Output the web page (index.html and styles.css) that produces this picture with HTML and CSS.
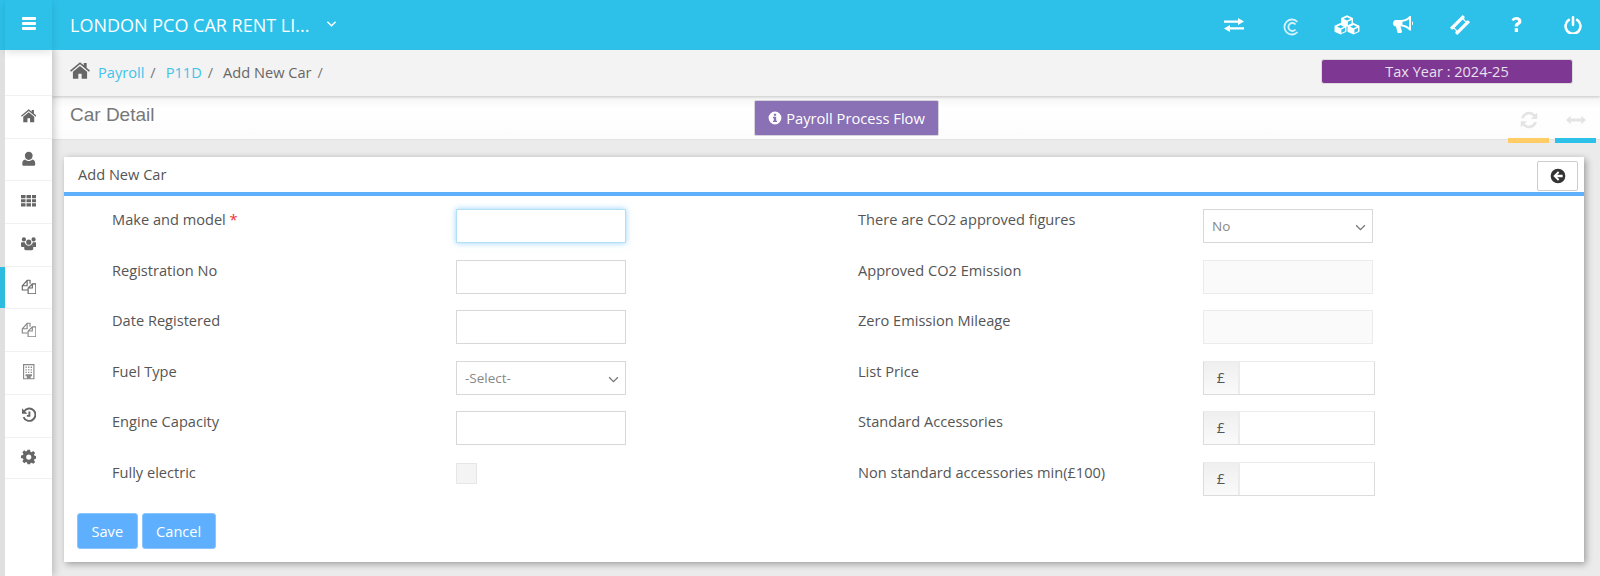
FILE: index.html
```html
<!DOCTYPE html>
<html lang="en">
<head>
<meta charset="utf-8">
<title>Add New Car</title>
<link rel="stylesheet" href="styles.css">
</head>
<body>
<svg class="defs" width="0" height="0" aria-hidden="true">
  <symbol id="i-home" viewBox="0 0 24 20"><path fill="currentColor" d="M12 0 0 10l1.300 1.500L12 2.600l10.700 8.900L24 10l-4-3.400V1h-3.500v2.700zM3.500 11.500V20H10v-6h4v6h6.500v-8.500L12 4.500z"/></symbol>
  <symbol id="i-user" viewBox="0 0 24 24"><path fill="currentColor" d="M12 1a6 6 0 0 1 6 6.500c0 3.500-2.500 6.500-6 6.500s-6-3-6-6.500A6 6 0 0 1 12 1zM6.500 13c1.400 1.500 3.300 2.300 5.500 2.300s4.100-.8 5.500-2.300c3 .5 4.500 2.700 4.500 6v1.500c0 1.400-1 2.500-2.500 2.500h-15C3 23 2 21.900 2 20.500V19c0-3.300 1.500-5.500 4.500-6z"/></symbol>
  <symbol id="i-grid" viewBox="0 0 24 20"><path fill="currentColor" d="M0 1h7v5H0zM8.500 1h7v5h-7zM17 1h7v5h-7zM0 7.500h7v5H0zM8.500 7.500h7v5h-7zM17 7.500h7v5h-7zM0 14h7v5H0zM8.500 14h7v5h-7zM17 14h7v5h-7z"/></symbol>
  <symbol id="i-group" viewBox="0 0 24 20"><path fill="currentColor" d="M12 3.500a4 4 0 1 1 0 8 4 4 0 0 1 0-8zM4.500 0a3.300 3.300 0 1 1 0 6.600 3.300 3.300 0 0 1 0-6.600zM19.500 0a3.300 3.300 0 1 1 0 6.600 3.300 3.300 0 0 1 0-6.600zM1 7.500h4.800c.2 1.600 1 3 2.200 3.900-1.700.6-2.700 1.900-3 3.600H2c-1 0-2-.6-2-2V9.500c0-1 .3-2 1-2zM23 7.500h-4.800c-.2 1.600-1 3-2.200 3.900 1.700.6 2.700 1.900 3 3.600h3c1 0 2-.6 2-2V9.500c0-1-.3-2-1-2zM8 11.500c1 1 2.500 1.500 4 1.500s3-.5 4-1.500c2 .3 3 1.900 3 4v2c0 1.500-1 2.500-2.500 2.500h-9C6 20 5 19 5 17.500v-2c0-2.100 1-3.700 3-4z"/></symbol>
  <symbol id="i-docs" viewBox="0 0 24 24"><path fill="none" stroke="currentColor" stroke-width="1.800" stroke-linejoin="round" d="M10 17H2v-6.500L9.500 2H14v5.500M11 23V14l6.500-6.500H23V23zM9.500 2v8.500H2M17.500 7.500V14H11"/></symbol>
  <symbol id="i-building" viewBox="0 0 20 24"><path fill="none" stroke="currentColor" stroke-width="1.800" d="M2 1h16v22H2z"/><path fill="currentColor" d="M5 4h2v2H5zM9 4h2v2H9zM13 4h2v2h-2zM5 8h2v2H5zM9 8h2v2H9zM13 8h2v2h-2zM5 12h2v2H5zM9 12h2v2H9zM13 12h2v2h-2zM5 16h10v3h-2v4H7v-4H5z"/></symbol>
  <symbol id="i-history" viewBox="0 0 24 24"><path fill="none" stroke="currentColor" stroke-width="3" d="M5 6.500A9.500 9.500 0 1 1 4 15.500"/><path fill="currentColor" d="M1.500 2v8.500H10zM11.500 7h3v8H9v-2.600h2.500z"/></symbol>
  <symbol id="i-cog" viewBox="0 0 24 24"><path fill="currentColor" fill-rule="evenodd" d="M10 1h4l.6 3.100 1.800.8L19 3.100 21.900 6l-1.800 2.600.8 1.800 3.100.6v4l-3.100.6-.8 1.800 1.800 2.600-2.900 2.900-2.600-1.800-1.800.8L14 24h-4l-.6-3.100-1.800-.8L5 21.900 2.100 19l1.800-2.600-.8-1.800L0 14v-4l3.100-.6.800-1.800L2.100 5 5 2.100l2.600 1.800 1.800-.8zM12 8.500a4 4 0 1 0 0 8 4 4 0 0 0 0-8z"/></symbol>
  <symbol id="i-swap" viewBox="0 0 20 14"><path fill="currentColor" d="M0 2.500h14V0l6 3.500L14 7V4.800H0zM20 9.200H6V7l-6 3.500L6 14v-2.500h14z"/></symbol>
  <symbol id="i-copyc" viewBox="0 0 16 18"><path fill="none" stroke="currentColor" stroke-width="1.800" d="M14 4a7.500 7.500 0 1 0 0 10M12 6.500a4 4 0 1 0 0 5"/></symbol>
  <symbol id="i-cubes" viewBox="0 0 24 18">
    <path transform="translate(12 5.300)" fill="currentColor" fill-rule="evenodd" d="M0-5.300 5.500-2.800V2.800L0 5.300-5.500 2.800V-2.800zM0-3.500-3.200-2 0-.5 3.200-2zM.8.700V3.900L4.200 2.300V-.9z"/>
    <path transform="translate(6 12.500)" fill="currentColor" fill-rule="evenodd" d="M0-5.300 5.500-2.800V2.800L0 5.300-5.500 2.800V-2.800zM0-3.500-3.200-2 0-.5 3.200-2zM.8.700V3.900L4.200 2.300V-.9z"/>
    <path transform="translate(18 12.500)" fill="currentColor" fill-rule="evenodd" d="M0-5.300 5.500-2.800V2.800L0 5.300-5.500 2.800V-2.800zM0-3.500-3.200-2 0-.5 3.200-2zM.8.700V3.900L4.200 2.300V-.9z"/>
  </symbol>
  <symbol id="i-bullhorn" viewBox="0 0 20 17"><path fill="currentColor" fill-rule="evenodd" d="M16.500 0H18v14.500h-1.500C14.300 12 11 10.500 7.500 10.300L9 15.500 8.300 17H5l-.6-.8L3 10.400C1.200 10.300 0 9 0 7.200S1.200 4 3 4h5c3 0 6.300-1.300 8.500-4zM16 3.200c-2 1.500-4.200 2.300-6.500 2.600v3c2.300.3 4.500 1.100 6.500 2.600z"/><path fill="currentColor" d="M19 5.300c1.300.5 1.300 3.500 0 4z"/></symbol>
  <symbol id="i-ticket" viewBox="0 0 24 24"><path fill="currentColor" fill-rule="evenodd" d="M15 1l2.300 2.300a2 2 0 0 0 3.400 3.400L23 9 9 23l-2.300-2.300a2 2 0 0 0-3.400-3.400L1 15zM15 6 6 15l3 3 9-9z"/></symbol>
  <symbol id="i-question" viewBox="5 1 14.500 22"><path fill="currentColor" d="M12 1c4.500 0 7.500 2.600 7.500 6.200 0 2.800-1.600 4-3.300 5.100-1 .7-1.700 1.200-1.700 2.200v.5H9.700v-1c0-2.200 1.200-3.500 2.700-4.500 1.100-.8 2-1.300 2-2.400 0-1.200-1-1.900-2.500-1.900-1.700 0-2.900.9-3.900 2.100L5 5C6.600 2.600 8.800 1 12 1zM9.700 17.500h4.800V23H9.700z"/></symbol>
  <symbol id="i-power" viewBox="0 0 24 24"><path fill="none" stroke="currentColor" stroke-width="3.400" stroke-linecap="round" d="M6.500 5.200a10 10 0 1 0 11 0M12 1.800v10"/></symbol>
  <symbol id="i-sync" viewBox="0 0 24 24"><path fill="currentColor" d="M23 2v8.500h-8.500l3.300-3.300A7.500 7.500 0 0 0 5.200 9.500H1.500A11 11 0 0 1 20.300 4.700zM1 22v-8.500h8.500l-3.300 3.300a7.500 7.500 0 0 0 12.600-2.300h3.700A11 11 0 0 1 3.700 19.300z"/></symbol>
  <symbol id="i-arrows" viewBox="0 0 24 12"><path fill="currentColor" d="M0 6l5.500-5v3.200h13V1L24 6l-5.500 5V7.800h-13V11z"/></symbol>
  <symbol id="i-info" viewBox="0 0 24 24"><path fill="currentColor" fill-rule="evenodd" d="M12 1a11 11 0 1 1 0 22 11 11 0 0 1 0-22zM10 4.500v3.500h4V4.500zM8.500 10v2.500H10v4H8.500V19h7v-2.500H14V10z"/></symbol>
  <symbol id="i-back" viewBox="0 0 24 24"><path fill="currentColor" fill-rule="evenodd" d="M12 1a11 11 0 1 1 0 22 11 11 0 0 1 0-22zM12 5 5 12l7 7 2-2-3.300-3.300H19v-3.400h-8.300L14 7z"/></symbol>
</svg>

<div class="app">
  <header class="topbar">
    <button class="burger" type="button" aria-label="Menu"><span></span><span></span><span></span></button>
    <div class="company">LONDON PCO CAR RENT LI...</div>
    <svg class="caret" viewBox="0 0 12 8"><path d="M1.500 1.500 6 6l4.500-4.500" fill="none" stroke="currentColor" stroke-width="1.600"/></svg>
    <nav class="top-icons">
      <span class="tb"><svg class="ti ti-swap"><use href="#i-swap"/></svg></span>
      <span class="tb"><svg class="ti ti-c"><use href="#i-copyc"/></svg></span>
      <span class="tb"><svg class="ti ti-cubes"><use href="#i-cubes"/></svg></span>
      <span class="tb"><svg class="ti ti-horn"><use href="#i-bullhorn"/></svg></span>
      <span class="tb"><svg class="ti ti-ticket"><use href="#i-ticket"/></svg></span>
      <span class="tb"><svg class="ti ti-q"><use href="#i-question"/></svg></span>
      <span class="tb"><svg class="ti ti-power"><use href="#i-power"/></svg></span>
    </nav>
  </header>
  <div class="body">
    <aside class="sidebar">
      <a class="side-item"><svg class="si"><use href="#i-home"/></svg></a>
      <a class="side-item"><svg class="si"><use href="#i-user"/></svg></a>
      <a class="side-item"><svg class="si"><use href="#i-grid"/></svg></a>
      <a class="side-item"><svg class="si"><use href="#i-group"/></svg></a>
      <a class="side-item active"><svg class="si"><use href="#i-docs"/></svg></a>
      <a class="side-item"><svg class="si light"><use href="#i-docs"/></svg></a>
      <a class="side-item"><svg class="si light"><use href="#i-building"/></svg></a>
      <a class="side-item"><svg class="si"><use href="#i-history"/></svg></a>
      <a class="side-item"><svg class="si"><use href="#i-cog"/></svg></a>
    </aside>
    <main class="main">
      <div class="crumbs">
        <svg class="crumb-home"><use href="#i-home"/></svg>
        <a class="crumb-link">Payroll</a><span class="sep">/</span>
        <a class="crumb-link">P11D</a><span class="sep">/</span>
        <span class="crumb-cur">Add New Car</span><span class="sep">/</span>
        <div class="tax">Tax Year : 2024-25</div>
      </div>
      <div class="titlebar">
        <h1 class="title">Car Detail</h1>
        <button class="flow" type="button"><svg class="flow-i"><use href="#i-info"/></svg>Payroll Process Flow</button>
        <div class="tools">
          <span class="tool tool-y"><svg class="tool-i sync"><use href="#i-sync"/></svg></span>
          <span class="tool tool-b"><svg class="tool-i arrows"><use href="#i-arrows"/></svg></span>
        </div>
      </div>
      <section class="panel">
        <div class="panel-head">
          <span class="panel-title">Add New Car</span>
          <button class="back" type="button" aria-label="Back"><svg class="back-i"><use href="#i-back"/></svg></button>
        </div>
        <form class="form">
          <div class="col col-l">
            <div class="row"><label>Make and model <b class="req">*</b></label><input class="ctl focus" type="text"></div>
            <div class="row"><label>Registration No</label><input class="ctl" type="text"></div>
            <div class="row"><label>Date Registered</label><input class="ctl" type="text"></div>
            <div class="row"><label>Fuel Type</label><div class="ctl sel">-Select-<svg class="chev" viewBox="0 0 12 8"><path d="M1 1.500 6 6.500l5-5" fill="none" stroke="currentColor" stroke-width="1.500"/></svg></div></div>
            <div class="row"><label>Engine Capacity</label><input class="ctl" type="text"></div>
            <div class="row"><label>Fully electric</label><span class="check"></span></div>
          </div>
          <div class="col col-r">
            <div class="row"><label>There are CO2 approved figures</label><div class="ctl sel">No<svg class="chev" viewBox="0 0 12 8"><path d="M1 1.500 6 6.500l5-5" fill="none" stroke="currentColor" stroke-width="1.500"/></svg></div></div>
            <div class="row"><label>Approved CO2 Emission</label><input class="ctl dis" type="text" disabled></div>
            <div class="row"><label>Zero Emission Mileage</label><input class="ctl dis" type="text" disabled></div>
            <div class="row"><label>List Price</label><div class="group"><span class="addon">£</span><input class="grp-in" type="text"></div></div>
            <div class="row"><label>Standard Accessories</label><div class="group"><span class="addon">£</span><input class="grp-in" type="text"></div></div>
            <div class="row"><label>Non standard accessories min(£100)</label><div class="group"><span class="addon">£</span><input class="grp-in" type="text"></div></div>
          </div>
        </form>
        <div class="actions">
          <button class="btn" type="button">Save</button>
          <button class="btn" type="button">Cancel</button>
        </div>
      </section>
    </main>
  </div>
</div>
</body>
</html>
```
FILE: styles.css
```css
* { box-sizing: border-box; }
html, body { margin: 0; height: 100%; overflow: hidden; }
body { font-family: "Open Sans", sans-serif; font-size: 14.6px; color: #555; background: #ebebeb; }
.defs { position: absolute; }
button { font-family: inherit; }
.app { height: 576px; display: flex; flex-direction: column; }

.topbar { height: 50px; flex: none; background: #2dc1ea; color: #fff; display: flex; align-items: center; padding-left: 5px; position: relative; z-index: 3; }
.burger { width: 47px; height: 50px; border: 0; background: #2dc1ea; box-shadow: 0 2px 8px rgba(0,0,0,.12); display: flex; flex-direction: column; gap: 2px; align-items: center; justify-content: center; padding: 0 0 4px; }
.burger span { width: 14px; height: 3px; background: #fff; border-radius: 1px; }
.company { margin-left: 18px; font-size: 18px; line-height: 48px; height: 48px; white-space: nowrap; width: 256px; }
.caret { width: 11px; height: 8px; margin-top: -2px; }
.top-icons { margin-left: auto; margin-right: -1px; display: flex; align-items: center; height: 50px; }
.tb { width: 56.5px; height: 50px; display: flex; align-items: center; justify-content: center; padding-bottom: 1px; }
.ti { display: block; color: #fff; }
.ti-swap { width: 20px; height: 14px; }
.ti-c { width: 17px; height: 18px; margin: 5px 0 0 2px; color: #d5f2fb; }
.ti-cubes { width: 26px; height: 20px; }
.ti-horn { width: 20px; height: 17px; }
.ti-ticket { width: 22px; height: 22px; }
.ti-q { width: 11px; height: 15px; }
.ti-power { width: 18px; height: 18px; }

.body { flex: 1; display: flex; min-height: 0; }
.sidebar { width: 52px; flex: none; border-left: 5px solid #e0e0e0; background: #fff; padding-top: 45px; box-shadow: 2px 0 8px rgba(0,0,0,.22); position: relative; z-index: 2; }
.side-item { display: flex; align-items: center; justify-content: center; height: 42.7px; border-top: 1px solid #f1f1f1; color: #666; position: relative; padding-bottom: 2px; }
.side-item:last-child { border-bottom: 1px solid #f1f1f1; }
.side-item.active::before { content: ""; position: absolute; left: -5px; top: 0; bottom: 0; width: 5px; background: #2dbbdf; }
.si { width: 15.5px; height: 15.5px; display: block; }
.si.light { color: #888; }

.main { flex: 1; min-width: 0; display: flex; flex-direction: column; }
.crumbs { height: 46px; flex: none; background: #f3f3f3; display: flex; align-items: center; padding: 0 27px 0 18px; box-shadow: 0 1px 3px rgba(0,0,0,.2); position: relative; z-index: 1; }
.crumb-home { width: 20px; height: 17px; color: #666; margin-right: 8px; margin-top: -6px; }
.crumb-link { color: #3fc3ea; margin-top: -3px; }
.crumb-cur { color: #666; margin-top: -3px; }
.sep { color: #777; margin: -3px 10px 0 6px; }
.crumbs > .sep:last-of-type { margin-right: 0; }
.tax { margin-left: auto; width: 252px; height: 25px; margin-top: -3px; background: #7e3792; color: #e9e0ee; border: 1px solid #dcdcdc; border-radius: 3px; text-align: center; font-size: 14.5px; line-height: 23px; }

.titlebar { height: 44px; flex: none; background: linear-gradient(#f5f5f5, #fff 30%, #fcfcfc); border-bottom: 1px solid #e2e2e2; display: flex; align-items: flex-start; padding-left: 18px; position: relative; }
.title { margin: 7px 0 0; font: 400 19px/24px "Liberation Sans", sans-serif; color: #777; }
.flow { position: absolute; left: 702px; top: 4px; height: 36px; width: 185px; padding: 0; background: #8a70b4; color: #fff; border: 1px solid #d6d3dc; border-radius: 2px; font-size: 14.7px; font-weight: 500; display: flex; align-items: center; justify-content: center; gap: 4px; }
.flow-i { width: 14px; height: 14px; }
.tools { position: absolute; right: 4px; top: 0; display: flex; gap: 6px; height: 47px; }
.tool { width: 41px; height: 47px; display: flex; justify-content: center; padding-top: 15px; border-bottom: 5px solid #fc6; color: #e4e4e4; }
.tool-b { border-bottom-color: #2dc1ea; }
.tool-i { width: 18px; height: 18px; }
.arrows { width: 20px; height: 10px; margin-top: 4px; }

.panel { margin: 17px 16px 0 12px; height: 405px; background: #fff; box-shadow: 2px 2px 7px rgba(0,0,0,.35); display: flex; flex-direction: column; position: relative; }
.panel-head { height: 39px; flex: none; border-bottom: 4px solid #5eb0fb; display: flex; align-items: center; padding: 0 6px 0 14px; }
.panel-title { color: #555; margin-top: -2px; }
.back { margin-left: auto; width: 41px; height: 30px; margin-top: 3px; background: #fff; border: 1px solid #ccc; border-radius: 2px; padding: 0; display: flex; align-items: center; justify-content: center; }
.back-i { width: 16px; height: 16px; color: #333; }

.form { display: flex; padding-top: 13px; }
.col { flex: none; }
.col-l { width: 794px; padding-left: 48px; }
.row { height: 50.5px; display: flex; align-items: flex-start; }
label { display: block; width: 344px; flex: none; line-height: 20px; color: #555; }
.col-r label { width: 345px; }
.req { color: #e33; font-weight: 400; }
.ctl { width: 169.5px; height: 34px; border: 1px solid #d8d8d8; background: #fff; padding: 0 8px; font-family: inherit; font-size: 13.5px; color: #888; display: block; position: relative; outline: 0; }
.focus { border-color: #b3e0f5; box-shadow: 0 0 6px rgba(80,180,250,.6); }
.dis { background: #fafafa; border-color: #ebebeb; }
.sel { display: flex; align-items: center; }
.chev { width: 11px; height: 7px; position: absolute; right: 6px; top: 14px; color: #777; }
.check { display: block; width: 21px; height: 21px; background: #f4f4f4; border: 1px solid #e6e6e6; margin-top: 1px; }
.group { display: flex; width: 172px; height: 34px; border: 1px solid #dcdcdc; border-top-color: #ececec; }
.addon { width: 36px; flex: none; background: linear-gradient(#efefef, #fafafa); border-right: 2px solid #ececec; color: #555; text-align: center; line-height: 30px; }
.grp-in { flex: 1; min-width: 0; border: 0; background: #fff; outline: 0; }

.actions { display: flex; gap: 4px; margin-top: 1px; padding-left: 13px; }
.btn { height: 36px; padding: 0 13.5px; background: #5eb0ff; color: #fff; border: 1px solid #8ac6fc; border-radius: 3px; font-size: 14.6px; }
```
